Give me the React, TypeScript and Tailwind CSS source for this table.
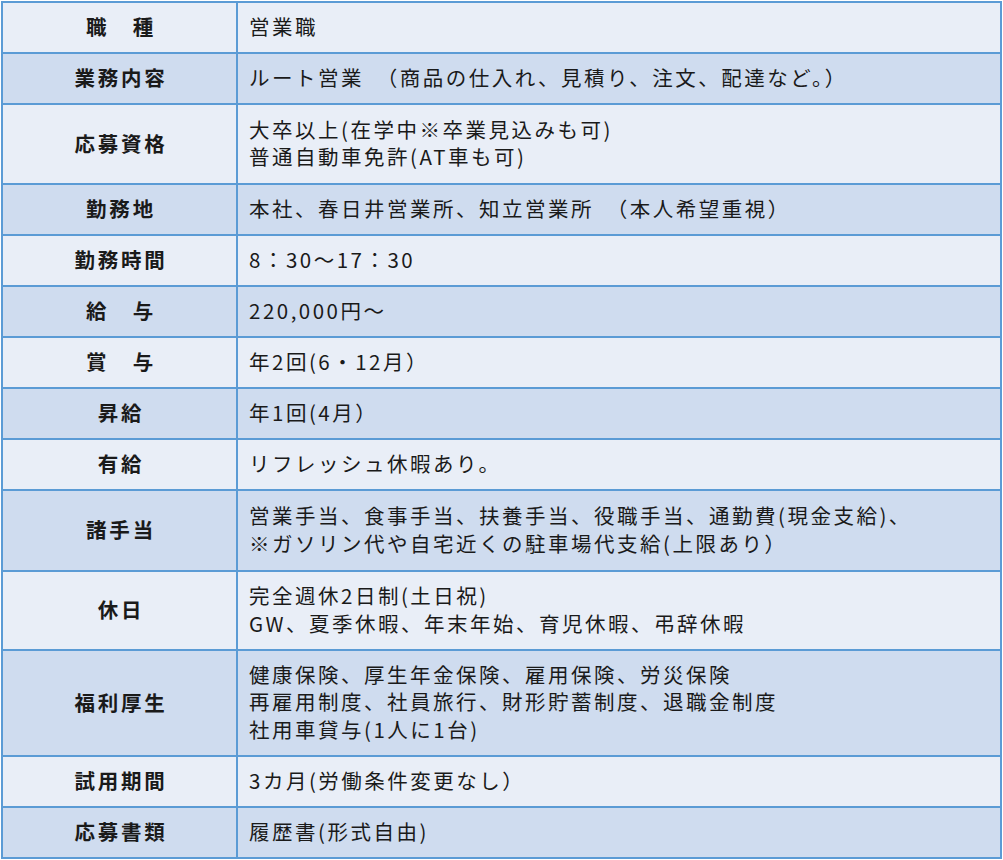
const rows: { label: string; lines: string[]; h: number }[] = [
  { label: '職　種', lines: ['営業職'], h: 51 },
  { label: '業務内容', lines: ['ルート営業　（商品の仕入れ、見積り、注文、配達など。）'], h: 51 },
  { label: '応募資格', lines: ['大卒以上(在学中※卒業見込みも可)', '普通自動車免許(AT車も可)'], h: 80 },
  { label: '勤務地', lines: ['本社、春日井営業所、知立営業所　（本人希望重視）'], h: 51 },
  { label: '勤務時間', lines: ['8：30〜17：30'], h: 51 },
  { label: '給　与', lines: ['220,000円〜'], h: 51 },
  { label: '賞　与', lines: ['年2回(6・12月）'], h: 51 },
  { label: '昇給', lines: ['年1回(4月）'], h: 51 },
  { label: '有給', lines: ['リフレッシュ休暇あり。'], h: 51 },
  {
    label: '諸手当',
    lines: ['営業手当、食事手当、扶養手当、役職手当、通勤費(現金支給)、', '※ガソリン代や自宅近くの駐車場代支給(上限あり）'],
    h: 81,
  },
  { label: '休日', lines: ['完全週休2日制(土日祝)', 'GW、夏季休暇、年末年始、育児休暇、弔辞休暇'], h: 79 },
  {
    label: '福利厚生',
    lines: ['健康保険、厚生年金保険、雇用保険、労災保険', '再雇用制度、社員旅行、財形貯蓄制度、退職金制度', '社用車貸与(1人に1台)'],
    h: 106,
  },
  { label: '試用期間', lines: ['3カ月(労働条件変更なし）'], h: 51 },
  { label: '応募書類', lines: ['履歴書(形式自由)'], h: 51 },
];

export default function App() {
  return (
    <div
      className="w-[1003px] h-[860px] bg-white text-[#1a1a1a]"
      style={{ fontFamily: '"Noto Sans CJK JP", "Noto Sans", sans-serif' }}
    >
      <table className="w-[1001px] ml-px mt-px border-collapse table-fixed">
        <colgroup>
          <col className="w-[235px]" />
          <col />
        </colgroup>
        <tbody>
          {rows.map((r, i) => (
            <tr key={r.label} className={i % 2 === 0 ? 'bg-[#e9eef7]' : 'bg-[#cfdcef]'} style={{ height: r.h }}>
              <td className="border-2 border-[#5b9bd5] text-center font-bold text-[20.5px] tracking-[2.8px] leading-none pl-[3px] pb-[2px]">
                {r.label}
              </td>
              <td className="border-2 border-[#5b9bd5] pl-[11px] pb-[2px] text-[20.5px] tracking-[2.5px] leading-[27.5px]">
                {r.lines.map((l) => (
                  <div key={l}>{l}</div>
                ))}
              </td>
            </tr>
          ))}
        </tbody>
      </table>
    </div>
  );
}
